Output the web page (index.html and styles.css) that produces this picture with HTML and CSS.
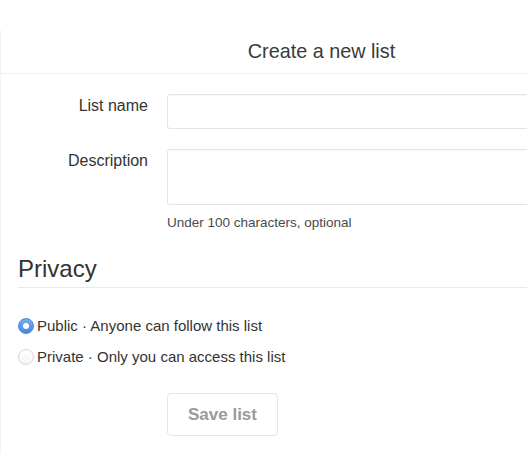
FILE: index.html
```html
<!DOCTYPE html>
<html>
<head>
<meta charset="utf-8">
<link rel="stylesheet" href="styles.css">
</head>
<body>
<div class="modal">
  <div class="modal-header">Create a new list</div>
  <form class="modal-body">
    <div class="row row-name">
      <label class="label">List name</label>
      <input class="field field-input" type="text">
    </div>
    <div class="row row-desc">
      <label class="label">Description</label>
      <div class="field-wrap">
        <textarea class="field field-area"></textarea>
        <div class="help">Under 100 characters, optional</div>
      </div>
    </div>
    <div class="privacy">
      <h2 class="privacy-title">Privacy</h2>
      <label class="radio-row">
        <span class="radio radio-checked"></span>
        <span class="radio-text">Public · Anyone can follow this list</span>
      </label>
      <label class="radio-row radio-row-2">
        <span class="radio"></span>
        <span class="radio-text">Private · Only you can access this list</span>
      </label>
    </div>
    <div class="actions">
      <button type="button" class="btn">Save list</button>
    </div>
  </form>
</div>
</body>
</html>
```

FILE: styles.css
```css
html, body {
  margin: 0;
  padding: 0;
  background: #fff;
  overflow: hidden;
}
body {
  font-family: "Liberation Sans", Arial, sans-serif;
  color: #333;
  width: 527px;
  height: 454px;
}
.modal {
  width: 642px;
  margin-top: 30px;
  height: 424px;
  border-left: 1px solid #f2f3f4;
  box-sizing: border-box;
}
.modal-header {
  height: 43px;
  border-bottom: 1px solid #eef0f2;
  display: flex;
  align-items: center;
  justify-content: center;
  font-size: 19.8px;
  color: #3a3a3a;
}
.modal-body {
  margin: 0;
  padding-top: 20px;
}
.row {
  display: grid;
  grid-template-columns: 147px 1fr;
  column-gap: 19px;
  align-items: start;
}
.row-desc {
  margin-top: 20px;
}
.label {
  text-align: right;
  font-size: 16px;
  line-height: 20px;
  padding-top: 2px;
  color: #333;
}
.field {
  display: block;
  box-sizing: border-box;
  width: 100%;
  margin: 0;
  border: 1px solid #e3e4e6;
  border-radius: 3px;
  background: #fff;
  box-shadow: inset 0 1px 1px rgba(0,0,0,0.03);
  font: inherit;
  outline: none;
}
.field-input {
  height: 35px;
}
.field-area {
  height: 56px;
  resize: none;
}
.help {
  margin-top: 9px;
  font-size: 13.5px;
  line-height: 18px;
  color: #4a4a4a;
}
.privacy {
  padding-left: 17px;
}
.privacy-title {
  margin: 23px 0 0;
  font-size: 24px;
  font-weight: normal;
  line-height: 28px;
  padding-bottom: 4px;
  border-bottom: 1px solid #e8e9ea;
  color: #333;
}
.radio-row {
  display: flex;
  align-items: center;
  margin-top: 28px;
  height: 20px;
}
.radio-row-2 {
  margin-top: 11px;
}
.radio {
  width: 16px;
  height: 16px;
  box-sizing: border-box;
  border-radius: 50%;
  border: 1px solid #d8d8d8;
  background: linear-gradient(#fff, #f6f6f6);
  box-shadow: 0 0 1px rgba(0,0,0,0.06);
  margin-right: 3px;
  flex: none;
  display: flex;
  align-items: center;
  justify-content: center;
}
.radio-checked {
  border-color: #5089dc;
  background: linear-gradient(#78acf0, #4a86e0);
}
.radio-checked::after {
  content: "";
  width: 6px;
  height: 6px;
  border-radius: 50%;
  background: #fff;
}
.radio-text {
  font-size: 15px;
  line-height: 20px;
  color: #333;
}
.actions {
  padding-left: 166px;
  margin-top: 26px;
}
.btn {
  width: 111px;
  height: 43px;
  box-sizing: border-box;
  border: 1px solid #e6e6e6;
  border-radius: 4px;
  background: #fff;
  font-family: "Liberation Sans", Arial, sans-serif;
  font-weight: bold;
  font-size: 17px;
  color: #9a9a9a;
  padding: 0;
}
```
